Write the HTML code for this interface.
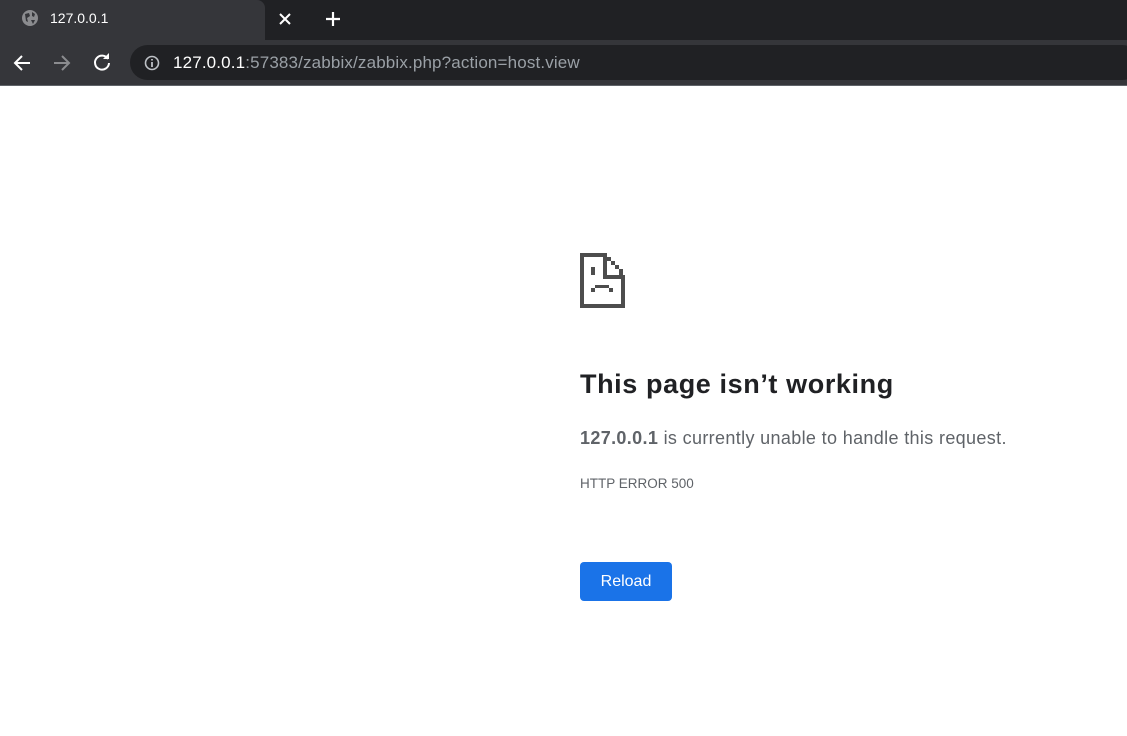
<!DOCTYPE html>
<html><head><meta charset="utf-8"><style>
*{margin:0;padding:0;box-sizing:border-box}
body{width:1127px;height:736px;background:#fff;font-family:"Liberation Sans",sans-serif;position:relative;overflow:hidden}
.top{position:absolute;left:0;top:0;width:1127px;height:40px;background:#202124}
.tab{position:absolute;left:0;top:0;width:265px;height:40px;background:#35363a;border-radius:0 8px 0 0}
.tb{position:absolute;left:0;top:40px;width:1127px;height:45px;background:#35363a}
.line{position:absolute;left:0;top:85px;width:1127px;height:1px;background:#5f6368}
.omni{position:absolute;left:130px;top:45px;width:1010px;height:35px;background:#202124;border-radius:18px}
.abs{position:absolute}
</style></head><body>
<div class="top"></div><div class="tab"></div>
<svg class="abs" style="left:21px;top:9px" width="18" height="18" viewBox="0 0 18 18"><circle cx="9" cy="9" r="8" fill="#8b8c8f"/><path d="M4 5 L8 4 L9 7 L6 9 L7 13 L5 12 Z M11 3 L14 5 L13 8 L11 7 Z M10 11 L14 11 L12 15 Z" fill="#35363a"/></svg>
<div class="abs" style="left:50px;top:10px;color:#fff;font-size:14px">127.0.0.1</div>
<svg class="abs" style="left:278px;top:12px" width="14" height="14"><path d="M2 2L12 12M12 2L2 12" stroke="#fff" stroke-width="2"/></svg>
<svg class="abs" style="left:324px;top:10px" width="18" height="18"><path d="M9 2V16M2 9H16" stroke="#fff" stroke-width="2.2"/></svg>
<div class="tb"></div><div class="line"></div>
<svg class="abs" style="left:12px;top:53px" width="20" height="20"><path d="M18 10H4M10 3L3 10L10 17" stroke="#fff" stroke-width="2" fill="none"/></svg>
<svg class="abs" style="left:52px;top:53px" width="20" height="20"><path d="M2 10H16M10 3L17 10L10 17" stroke="#8b8c8f" stroke-width="2" fill="none"/></svg>
<svg class="abs" style="left:92px;top:52px" width="20" height="20"><path d="M16 7A7 7 0 1 0 17 11" stroke="#fff" stroke-width="2" fill="none"/><path d="M11 7H17V1Z" fill="#fff"/></svg>
<div class="omni"></div>
<svg class="abs" style="left:144px;top:55px" width="16" height="16"><circle cx="8" cy="8" r="6.5" stroke="#bdc1c6" stroke-width="1.6" fill="none"/><path d="M8 7V12M8 4V5.5" stroke="#bdc1c6" stroke-width="1.8"/></svg>
<div class="abs" style="left:173px;top:53px;font-size:17px;color:#9aa0a6;white-space:nowrap;letter-spacing:0.15px"><span style="color:#fff">127.0.0.1</span>:57383/zabbix/zabbix.php?action=host.view</div>
<svg class="abs" style="left:580px;top:253px" width="46" height="55" viewBox="0 0 46 55" shape-rendering="crispEdges" fill="#4d4d4d">
<rect x="0" y="0" width="4" height="55"/><rect x="0" y="0" width="26" height="4"/><rect x="0" y="51" width="45" height="4"/><rect x="41" y="24" width="4" height="31"/>
<rect x="23" y="0" width="4" height="26"/><rect x="23" y="22" width="22" height="4"/><rect x="27" y="4" width="4" height="4"/><rect x="31" y="8" width="4" height="4"/><rect x="35" y="12" width="4" height="4"/><rect x="39" y="16" width="4" height="6"/>
<rect x="11" y="14" width="4" height="8"/><rect x="15" y="32" width="14" height="3"/><rect x="11" y="35" width="4" height="4"/><rect x="29" y="35" width="4" height="4"/>
</svg>
<div class="abs" style="left:580px;top:369px;font-size:27px;font-weight:bold;color:#202124;white-space:nowrap;letter-spacing:0.6px">This page isn’t working</div>
<div class="abs" style="left:580px;top:428px;font-size:18px;color:#5f6368;white-space:nowrap;letter-spacing:0.35px"><b>127.0.0.1</b> is currently unable to handle this request.</div>
<div class="abs" style="left:580px;top:476px;font-size:13.5px;color:#5f6368">HTTP ERROR 500</div>
<div class="abs" style="left:580px;top:562px;width:92px;height:39px;background:#1a73e8;border-radius:4px;color:#fff;font-size:16px;text-align:center;line-height:39px">Reload</div>
</body></html>
